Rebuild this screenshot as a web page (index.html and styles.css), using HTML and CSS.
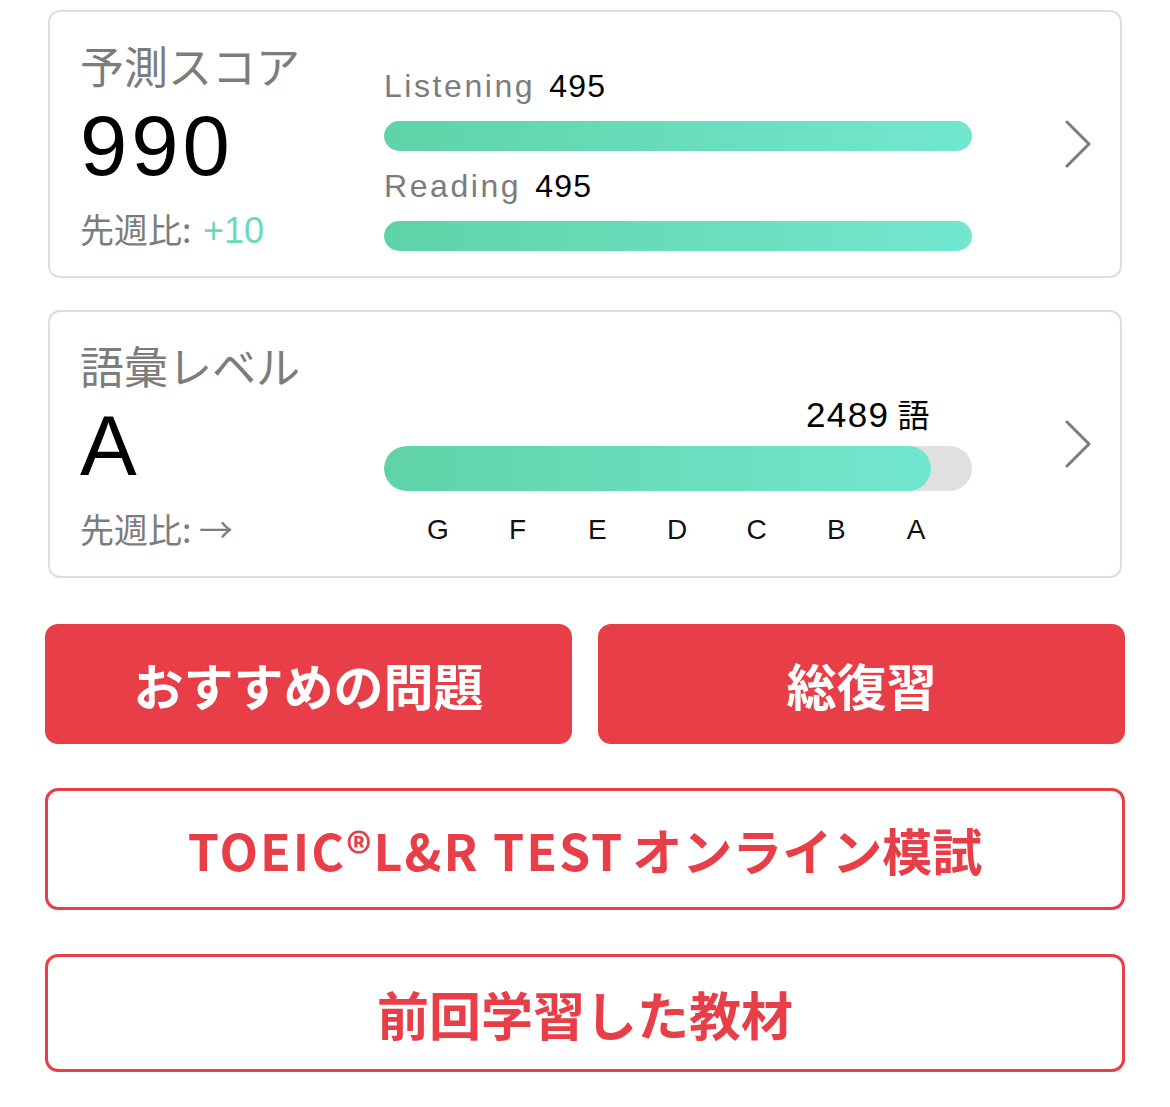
FILE: index.html
```
<!DOCTYPE html>
<html lang="ja">
<head>
    <meta charset="utf-8">
    <meta name="viewport" content="width=device-width, initial-scale=1.0">
    <title>ホーム</title>
    <link rel="stylesheet" href="styles.css">
</head>
<body>
    <main class="home">
        <!-- predicted score -->
        <section class="card">
            <div class="card_left">
                <h2 class="card_title">予測スコア</h2>
                <p class="big_value">990</p>
                <p class="diff">先週比: <span class="diff_up">+10</span></p>
            </div>
            <div class="card_mid score_mid">
                <p class="part_label">Listening<span class="part_score">495</span></p>
                <div class="bar"><div class="bar_fill" style="width: 100%"></div></div>
                <p class="part_label">Reading<span class="part_score">495</span></p>
                <div class="bar"><div class="bar_fill" style="width: 100%"></div></div>
            </div>
            <svg class="chevron" width="28" height="48" viewBox="0 0 28 48">
                <path d="M3 2 L25 24 L3 46" fill="none" stroke="#7b7b7b" stroke-width="3" stroke-linecap="round" stroke-linejoin="round"/>
            </svg>
        </section>

        <!-- vocabulary level -->
        <section class="card">
            <div class="card_left">
                <h2 class="card_title">語彙レベル</h2>
                <p class="big_value">A</p>
                <p class="diff">先週比: →</p>
            </div>
            <div class="card_mid vocab_mid">
                <p class="word_count" style="width: 93%">2489<span class="word_unit">語</span></p>
                <div class="bar bar_thick"><div class="bar_fill" style="width: 93%"></div></div>
                <div class="levels">
                    <span>G</span><span>F</span><span>E</span><span>D</span><span>C</span><span>B</span><span>A</span>
                </div>
            </div>
            <svg class="chevron" width="28" height="48" viewBox="0 0 28 48">
                <path d="M3 2 L25 24 L3 46" fill="none" stroke="#7b7b7b" stroke-width="3" stroke-linecap="round" stroke-linejoin="round"/>
            </svg>
        </section>

        <div class="btn_row">
            <button class="btn btn_red">おすすめの問題</button>
            <button class="btn btn_red">総復習</button>
        </div>
        <button class="btn btn_line"><span class="btn_latin">TOEIC®L&amp;R TEST</span>オンライン模試</button>
        <button class="btn btn_line btn_last">前回学習した教材</button>
    </main>
</body>
</html>
```
FILE: styles.css
```
/* vars */
:root {
    --gray-text: #7c7c7c;
    --card-border: #dedede;
    --red: #e83e47;
    --green-start: #5fd3a6;
    --green-end: #72e7d0;
    --track: #e0e0e0;
}

html {
    font-family: "Liberation Sans", "Noto Sans CJK JP", sans-serif;
}

body {
    margin: 0;
    background: #fff;
}

p,
h2 {
    margin: 0;
    font-weight: normal;
}

.home {
    padding: 10px 45px 0;
    width: 1080px;
}

.card {
    display: flex;
    margin: 0 3px 32px;
    height: 264px;
    border: 2px solid var(--card-border);
    border-radius: 12px;
}

.card_left {
    width: 304px;
    padding: 28px 0 0 30px;
}

.card_title {
    font-family: "Noto Sans CJK JP", sans-serif;
    font-size: 44px;
    line-height: 50px;
    color: var(--gray-text);
}

.big_value {
    margin-top: 12px;
    font-size: 85px;
    line-height: 88px;
    letter-spacing: 4px;
    color: #000;
}

.diff {
    margin-top: 19px;
    font-family: "Noto Sans CJK JP", sans-serif;
    font-size: 34px;
    line-height: 40px;
    color: var(--gray-text);
}

.diff_up {
    margin-left: 4px;
    font-family: "Liberation Sans", sans-serif;
    font-size: 36px;
    color: #6cd8bf;
}

.card_mid {
    width: 588px;
}

.score_mid {
    padding-top: 54px;
}

.part_label {
    font-size: 32px;
    line-height: 40px;
    letter-spacing: 0.08em;
    color: var(--gray-text);
}

.part_score {
    margin-left: 14px;
    color: #000;
    letter-spacing: 0.04em;
}

.bar {
    height: 30px;
    margin: 15px 0;
    border-radius: 15px;
    background: var(--track);
    overflow: hidden;
}

.bar_fill {
    height: 100%;
    border-radius: 999px;
    background: linear-gradient(90deg, var(--green-start), var(--green-end));
}

.vocab_mid {
    padding-top: 81px;
}

.word_count {
    font-size: 35px;
    line-height: 40px;
    text-align: right;
    letter-spacing: 0.04em;
    color: #000;
}

.word_unit {
    margin-left: 8px;
    font-family: "Noto Sans CJK JP", sans-serif;
    font-size: 32px;
}

.bar_thick {
    height: 45px;
    margin: 11px 0 21px;
    border-radius: 23px;
}

.levels {
    display: grid;
    grid-template-columns: repeat(7, 1fr);
    padding: 0 16px 0 14px;
    font-size: 28px;
    line-height: 36px;
    text-align: center;
    color: #111;
}

.chevron {
    align-self: center;
    margin: 0 28px 0 auto;
}

.btn_row {
    display: grid;
    grid-template-columns: 1fr 1fr;
    gap: 26px;
    margin-top: 46px;
}

.btn {
    display: block;
    width: 100%;
    font-family: "Noto Sans CJK JP", sans-serif;
    font-weight: bold;
    font-size: 50px;
    border-radius: 13px;
    cursor: pointer;
}

.btn_red {
    height: 120px;
    border: none;
    background: var(--red);
    color: #fff;
}

.btn_line {
    height: 122px;
    margin-top: 44px;
    border: 3px solid var(--red);
    background: #fff;
    color: var(--red);
}

.btn_latin {
    margin-right: 8px;
    letter-spacing: 2px;
}

.btn_last {
    height: 118px;
    font-size: 52px;
}
```
